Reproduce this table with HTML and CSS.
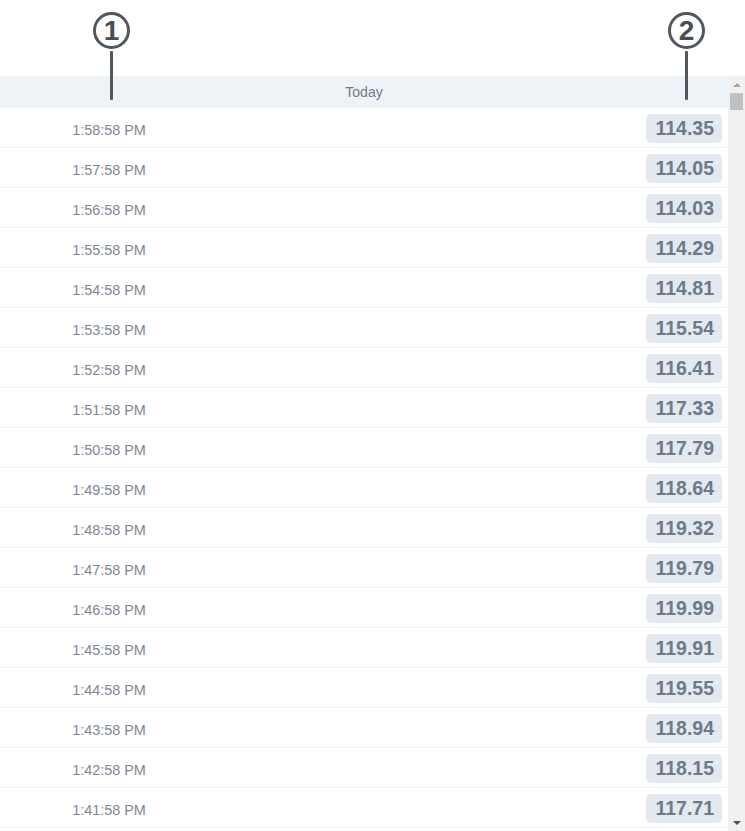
FILE: index.html
```html
<!DOCTYPE html>
<html>
<head>
<meta charset="utf-8">
<link rel="stylesheet" href="styles.css">
</head>
<body>
<div class="page">
  <div class="annotations">
    <div class="marker marker-1"><span class="num">1</span></div>
    <div class="marker marker-2"><span class="num">2</span></div>
    <div class="pointer pointer-1"></div>
    <div class="pointer pointer-2"></div>
  </div>
  <div class="table-wrap">
    <div class="table">
      <div class="header">Today</div>
      <div class="row"><span class="time">1:58:58 PM</span><span class="value">114.35</span></div>
      <div class="row"><span class="time">1:57:58 PM</span><span class="value">114.05</span></div>
      <div class="row"><span class="time">1:56:58 PM</span><span class="value">114.03</span></div>
      <div class="row"><span class="time">1:55:58 PM</span><span class="value">114.29</span></div>
      <div class="row"><span class="time">1:54:58 PM</span><span class="value">114.81</span></div>
      <div class="row"><span class="time">1:53:58 PM</span><span class="value">115.54</span></div>
      <div class="row"><span class="time">1:52:58 PM</span><span class="value">116.41</span></div>
      <div class="row"><span class="time">1:51:58 PM</span><span class="value">117.33</span></div>
      <div class="row"><span class="time">1:50:58 PM</span><span class="value">117.79</span></div>
      <div class="row"><span class="time">1:49:58 PM</span><span class="value">118.64</span></div>
      <div class="row"><span class="time">1:48:58 PM</span><span class="value">119.32</span></div>
      <div class="row"><span class="time">1:47:58 PM</span><span class="value">119.79</span></div>
      <div class="row"><span class="time">1:46:58 PM</span><span class="value">119.99</span></div>
      <div class="row"><span class="time">1:45:58 PM</span><span class="value">119.91</span></div>
      <div class="row"><span class="time">1:44:58 PM</span><span class="value">119.55</span></div>
      <div class="row"><span class="time">1:43:58 PM</span><span class="value">118.94</span></div>
      <div class="row"><span class="time">1:42:58 PM</span><span class="value">118.15</span></div>
      <div class="row"><span class="time">1:41:58 PM</span><span class="value">117.71</span></div>
    </div>
    <div class="scrollbar">
      <div class="arrow arrow-up"></div>
      <div class="thumb"></div>
      <div class="track"></div>
      <div class="arrow arrow-down"></div>
    </div>
  </div>
</div>
</body>
</html>
```

FILE: styles.css
```css
html, body {
  margin: 0;
  padding: 0;
  background: #ffffff;
  font-family: "Liberation Sans", Arial, sans-serif;
}

.page {
  position: relative;
  width: 745px;
  height: 831px;
  overflow: hidden;
}

.annotations {
  height: 76px;
}

.marker {
  position: absolute;
  top: 12px;
  width: 31px;
  height: 31px;
  border: 3px solid #50575f;
  border-radius: 50%;
  display: flex;
  align-items: center;
  justify-content: center;
  background: #ffffff;
}

.marker-1 { left: 93px; }
.marker-2 { left: 668px; }

.num {
  font-size: 28px;
  font-weight: bold;
  color: #474e55;
  line-height: 1;
  margin-top: 1px;
}

.pointer {
  position: absolute;
  top: 51px;
  width: 3px;
  height: 49px;
  background: #50575f;
  border-radius: 1px;
  z-index: 2;
}

.pointer-1 { left: 110px; }
.pointer-2 { left: 685px; }

.table-wrap {
  display: flex;
  height: 755px;
}

.table {
  width: 728px;
  display: flex;
  flex-direction: column;
}

.header {
  height: 32px;
  background: #eef3f7;
  color: #6e7a88;
  font-size: 14px;
  display: flex;
  align-items: center;
  justify-content: center;
}

.row {
  height: 39px;
  border-bottom: 1px solid #eef2f5;
  display: flex;
  align-items: center;
  justify-content: space-between;
  padding-right: 6px;
}

.time {
  width: 218px;
  text-align: center;
  font-size: 14.4px;
  color: #7d8896;
  padding-top: 5px;
}

.value {
  background: #e3e9ef;
  border-radius: 5px;
  height: 29px;
  padding: 0 8px 0 9px;
  display: flex;
  align-items: center;
  font-size: 19.5px;
  font-weight: bold;
  color: #6c7a8a;
  margin-top: 1px;
}

.scrollbar {
  width: 17px;
  background: #f1f1f1;
  display: flex;
  flex-direction: column;
  align-items: center;
}

.arrow {
  width: 0;
  height: 0;
  border-left: 4px solid transparent;
  border-right: 4px solid transparent;
}

.arrow-up {
  margin-top: 7px;
  border-bottom: 4px solid #a3a3a3;
}

.arrow-down {
  margin-bottom: 6px;
  border-top: 4px solid #505050;
}

.thumb {
  margin-top: 6px;
  width: 13px;
  height: 17px;
  background: #c1c1c1;
}

.track {
  flex: 1;
}
```
